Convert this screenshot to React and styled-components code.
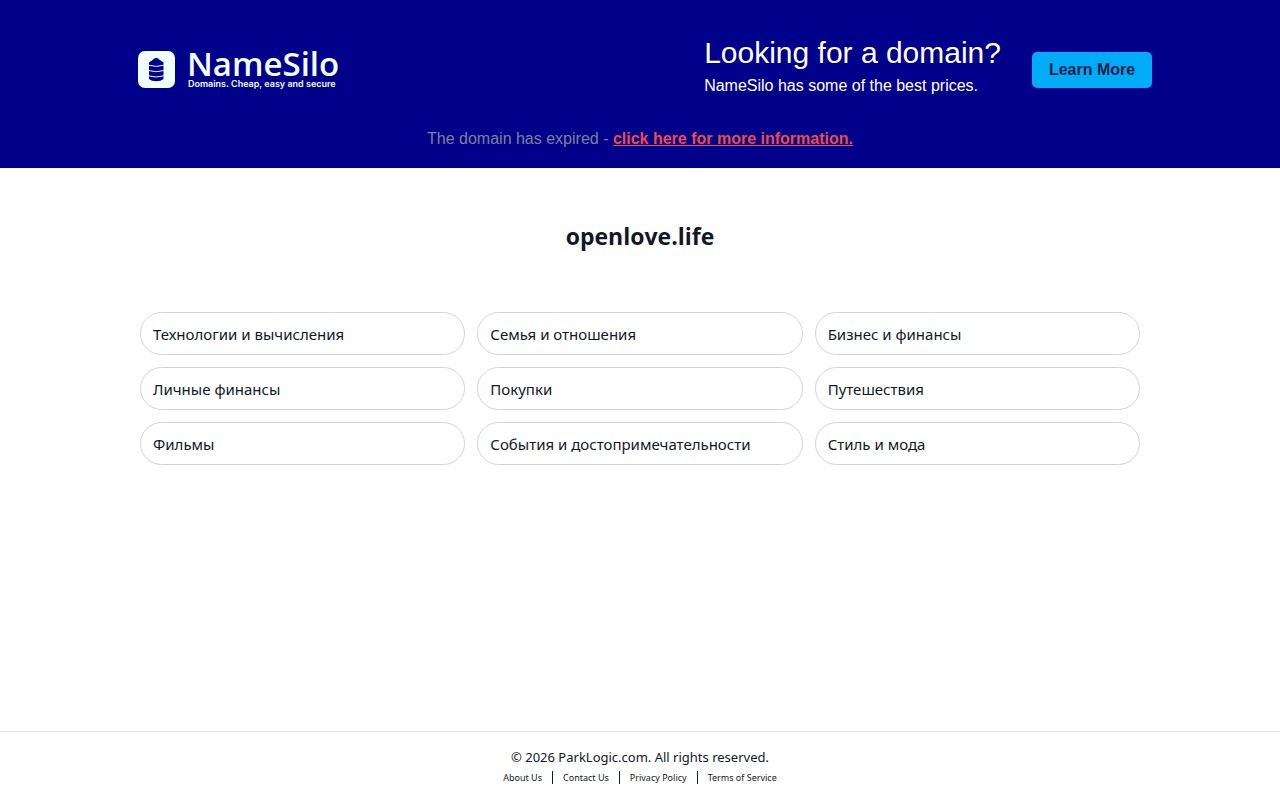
import React from 'react';
import styled, { createGlobalStyle } from 'styled-components';

const GlobalStyle = createGlobalStyle`
  * {
    box-sizing: border-box;
  }

  body {
    margin: 0;
    background: #ffffff;
    color: #111827;
    font-family: 'Noto Sans', 'Open Sans', sans-serif;
  }
`;

const Page = styled.div`
  display: flex;
  flex-direction: column;
  min-height: 100vh;
`;

const Banner = styled.header`
  padding: 37px 20px 18px;
  background: #00008b;
  font-family: 'Liberation Sans', Arial, sans-serif;
`;

const BannerRow = styled.div`
  display: flex;
  align-items: center;
  justify-content: space-between;
  max-width: 1024px;
  margin: 0 auto;
  padding-left: 10px;
`;

const Logo = styled.a`
  display: flex;
  align-items: center;
  gap: 11px;
  color: #f0ffff;
  font-family: 'Open Sans', sans-serif;
  text-decoration: none;
`;

const LogoText = styled.span`
  display: flex;
  flex-direction: column;
`;

const LogoName = styled.span`
  font-size: 33px;
  font-weight: 600;
  line-height: 28px;
`;

const LogoTagline = styled.span`
  padding-left: 1px;
  font-family: Inter, sans-serif;
  font-size: 9px;
  font-weight: 600;
  line-height: 12px;
`;

const Promo = styled.div`
  display: flex;
  align-items: center;
  gap: 31px;
`;

const PromoTitle = styled.h2`
  margin: 0;
  color: #ffffff;
  font-size: 30px;
  font-weight: 400;
  line-height: 32px;
`;

const PromoText = styled.p`
  margin: 0;
  color: #ffffff;
  font-size: 16px;
  line-height: 34px;
`;

const LearnMore = styled.button`
  width: 120px;
  height: 36px;
  padding: 0;
  border: none;
  border-radius: 5px;
  background: #00acf5;
  color: #0b1b4d;
  font-family: inherit;
  font-size: 16px;
  font-weight: 700;
  cursor: pointer;
`;

const Notice = styled.p`
  margin: 25px 0 0;
  color: #808098;
  font-size: 16px;
  line-height: 22px;
  text-align: center;
`;

const NoticeLink = styled.a`
  color: #ee4b4b;
  font-weight: 700;
`;

const Main = styled.main`
  flex: 1;
  width: 100%;
  max-width: 1040px;
  margin: 0 auto;
  padding: 52px 20px;
`;

const DomainName = styled.h1`
  margin: 0 0 60px;
  font-family: 'Open Sans', sans-serif;
  font-size: 23px;
  font-weight: 700;
  line-height: 32px;
  text-align: center;
`;

const TopicGrid = styled.nav`
  display: grid;
  grid-template-columns: repeat(3, 1fr);
  gap: 12px;
`;

const Topic = styled.a`
  padding: 9px 12px 8px;
  border: 1px solid #d1d5db;
  border-radius: 22px;
  color: inherit;
  font-size: 15px;
  line-height: 24px;
  text-decoration: none;
`;

const Footer = styled.footer`
  padding: 15px 20px 14px;
  border-top: 1px solid #e5e7eb;
  text-align: center;
`;

const Copyright = styled.p`
  margin: 0;
  padding-bottom: 2px;
  font-size: 13px;
  line-height: 20px;
`;

const FooterLinks = styled.nav`
  display: flex;
  align-items: center;
  justify-content: center;
  height: 17px;
`;

const FooterLink = styled.a`
  padding: 0 10px;
  color: inherit;
  font-size: 9px;
  line-height: 13px;
  text-decoration: none;

  & + & {
    border-left: 1px solid #111827;
  }
`;

const topics = [
  'Технологии и вычисления',
  'Семья и отношения',
  'Бизнес и финансы',
  'Личные финансы',
  'Покупки',
  'Путешествия',
  'Фильмы',
  'События и достопримечательности',
  'Стиль и мода',
];

const footerLinks = ['About Us', 'Contact Us', 'Privacy Policy', 'Terms of Service'];

const SiloIcon = () => (
  <svg width="38" height="38" viewBox="0 0 38 38" aria-hidden="true">
    <rect x="0" y="0" width="37" height="37" rx="7" fill="#f0ffff" />
    <path
      d="M11 11.5 17 7.2Q18.2 6.4 19.4 7.2L25.5 11.5V28Q23 30.3 18.2 30.3T11 28Z"
      fill="#00008b"
    />
    <path
      d="M10.5 14.2Q18.2 16.6 26 14.2M10.5 19.5Q18.2 21.9 26 19.5M10.5 24.8Q18.2 27.2 26 24.8"
      fill="none"
      stroke="#f0ffff"
      strokeWidth="1"
    />
  </svg>
);

const App = () => (
  <>
    <GlobalStyle />
    <Page>
      <Banner>
        <BannerRow>
          <Logo href="#">
            <SiloIcon />
            <LogoText>
              <LogoName>NameSilo</LogoName>
              <LogoTagline>Domains. Cheap, easy and secure</LogoTagline>
            </LogoText>
          </Logo>
          <Promo>
            <div>
              <PromoTitle>Looking for a domain?</PromoTitle>
              <PromoText>NameSilo has some of the best prices.</PromoText>
            </div>
            <LearnMore type="button">Learn More</LearnMore>
          </Promo>
        </BannerRow>
        <Notice>
          The domain has expired - <NoticeLink href="#">click here for more information.</NoticeLink>
        </Notice>
      </Banner>

      <Main>
        <DomainName>openlove.life</DomainName>
        <TopicGrid>
          {topics.map((topic) => (
            <Topic key={topic} href="#">{topic}</Topic>
          ))}
        </TopicGrid>
      </Main>

      <Footer>
        <Copyright>© 2026 ParkLogic.com. All rights reserved.</Copyright>
        <FooterLinks>
          {footerLinks.map((link) => (
            <FooterLink key={link} href="#">{link}</FooterLink>
          ))}
        </FooterLinks>
      </Footer>
    </Page>
  </>
);

export default App;
